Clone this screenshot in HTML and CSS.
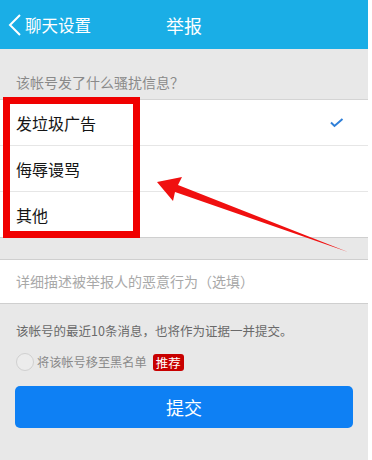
FILE: index.html
```html
<!DOCTYPE html>
<html lang="zh">
<head>
<meta charset="utf-8">
<link rel="stylesheet" href="styles.css">
</head>
<body>
<div class="page">
  <header class="topbar">
    <div class="back">
      <svg class="chev" width="14" height="22" viewBox="0 0 14 22"><path d="M12 1 L2 11 L12 21" fill="none" stroke="#fff" stroke-width="2"/></svg>
      <span>聊天设置</span>
    </div>
    <div class="title">举报</div>
  </header>
  <div class="hint">该帐号发了什么骚扰信息？</div>
  <ul class="list">
    <li class="row"><span>发垃圾广告</span>
      <svg class="check" width="14" height="10" viewBox="0 0 14 10"><path d="M1 4.5 L4.5 8 L12.5 1" fill="none" stroke="#2f7fd8" stroke-width="2"/></svg>
    </li>
    <li class="row"><span>侮辱谩骂</span></li>
    <li class="row"><span>其他</span></li>
  </ul>
  <div class="desc">详细描述被举报人的恶意行为（选填）</div>
  <div class="note">该帐号的最近10条消息，也将作为证据一并提交。</div>
  <div class="block">
    <span class="radio"></span>
    <span class="blabel">将该帐号移至黑名单</span>
    <span class="badge">推荐</span>
  </div>
  <button class="submit">提交</button>

  <div class="redbox"></div>
  <svg class="arrow" width="368" height="460" viewBox="0 0 368 460">
    <polygon points="157,182 182,177 178,185 348,252 175,192 173,201" fill="#f01010"/>
  </svg>
</div>
</body>
</html>
```
FILE: styles.css
```css
html, body {
  margin: 0;
  padding: 0;
  background: #ffffff;
}
.page {
  position: relative;
  width: 368px;
  height: 460px;
  background: #e8e8e8;
  font-family: "Noto Sans CJK SC", "Noto Sans", sans-serif;
  overflow: hidden;
}
.topbar {
  height: 49px;
  background: #1aaee6;
  display: flex;
  align-items: center;
  position: relative;
  color: #fff;
}
.back {
  display: flex;
  align-items: center;
  padding-left: 8px;
  font-size: 16.5px;
  gap: 3px;
}
.chev {
  display: block;
}
.title {
  position: absolute;
  left: 0;
  right: 0;
  text-align: center;
  font-size: 18px;
  pointer-events: none;
}
.hint {
  padding: 24px 16px 8px;
  line-height: 18px;
  font-size: 14px;
  color: #8a8a8a;
}
.list {
  list-style: none;
  margin: 0;
  padding: 0;
  background: #fff;
  border-top: 1px solid #d4d4d4;
  border-bottom: 1px solid #cfcfcf;
}
.row {
  height: 45px;
  display: flex;
  align-items: center;
  justify-content: space-between;
  padding: 0 24px 0 16px;
  font-size: 16px;
  color: #151515;
  position: relative;
}
.row + .row {
  border-top: 1px solid #e6e6e6;
}
.check {
  display: block;
}
.desc {
  margin-top: 21px;
  background: #fff;
  border-top: 1px solid #cfcfcf;
  border-bottom: 1px solid #cfcfcf;
  height: 43px;
  line-height: 43px;
  padding-left: 16px;
  font-size: 14px;
  color: #a8a8a8;
}
.note {
  margin-top: 18px;
  padding-left: 16px;
  line-height: 18px;
  font-size: 12.5px;
  color: #6a6a6a;
}
.block {
  margin-top: 12px;
  padding-left: 16px;
  height: 20px;
  display: flex;
  align-items: center;
}
.radio {
  width: 16px;
  height: 16px;
  border: 1px solid #d0d0d0;
  border-radius: 50%;
  background: #ececec;
  margin-right: 3px;
}
.blabel {
  font-size: 12.2px;
  color: #8a8a8a;
}
.badge {
  margin-left: 6px;
  background: #c80000;
  color: #fff;
  font-size: 12.5px;
  line-height: 17px;
  padding: 0 3px;
  border-radius: 3px;
}
.submit {
  display: block;
  margin: 14px 15px 0;
  width: 338px;
  height: 42px;
  border: none;
  border-radius: 5px;
  background: #0e80f4;
  color: #fff;
  font-family: "Noto Sans CJK SC", "Noto Sans", sans-serif;
  font-size: 18px;
}
.redbox {
  position: absolute;
  left: 3px;
  top: 97px;
  width: 123px;
  height: 127px;
  border: 7px solid #f00000;
}
.arrow {
  position: absolute;
  left: 0;
  top: 0;
  pointer-events: none;
}
```
